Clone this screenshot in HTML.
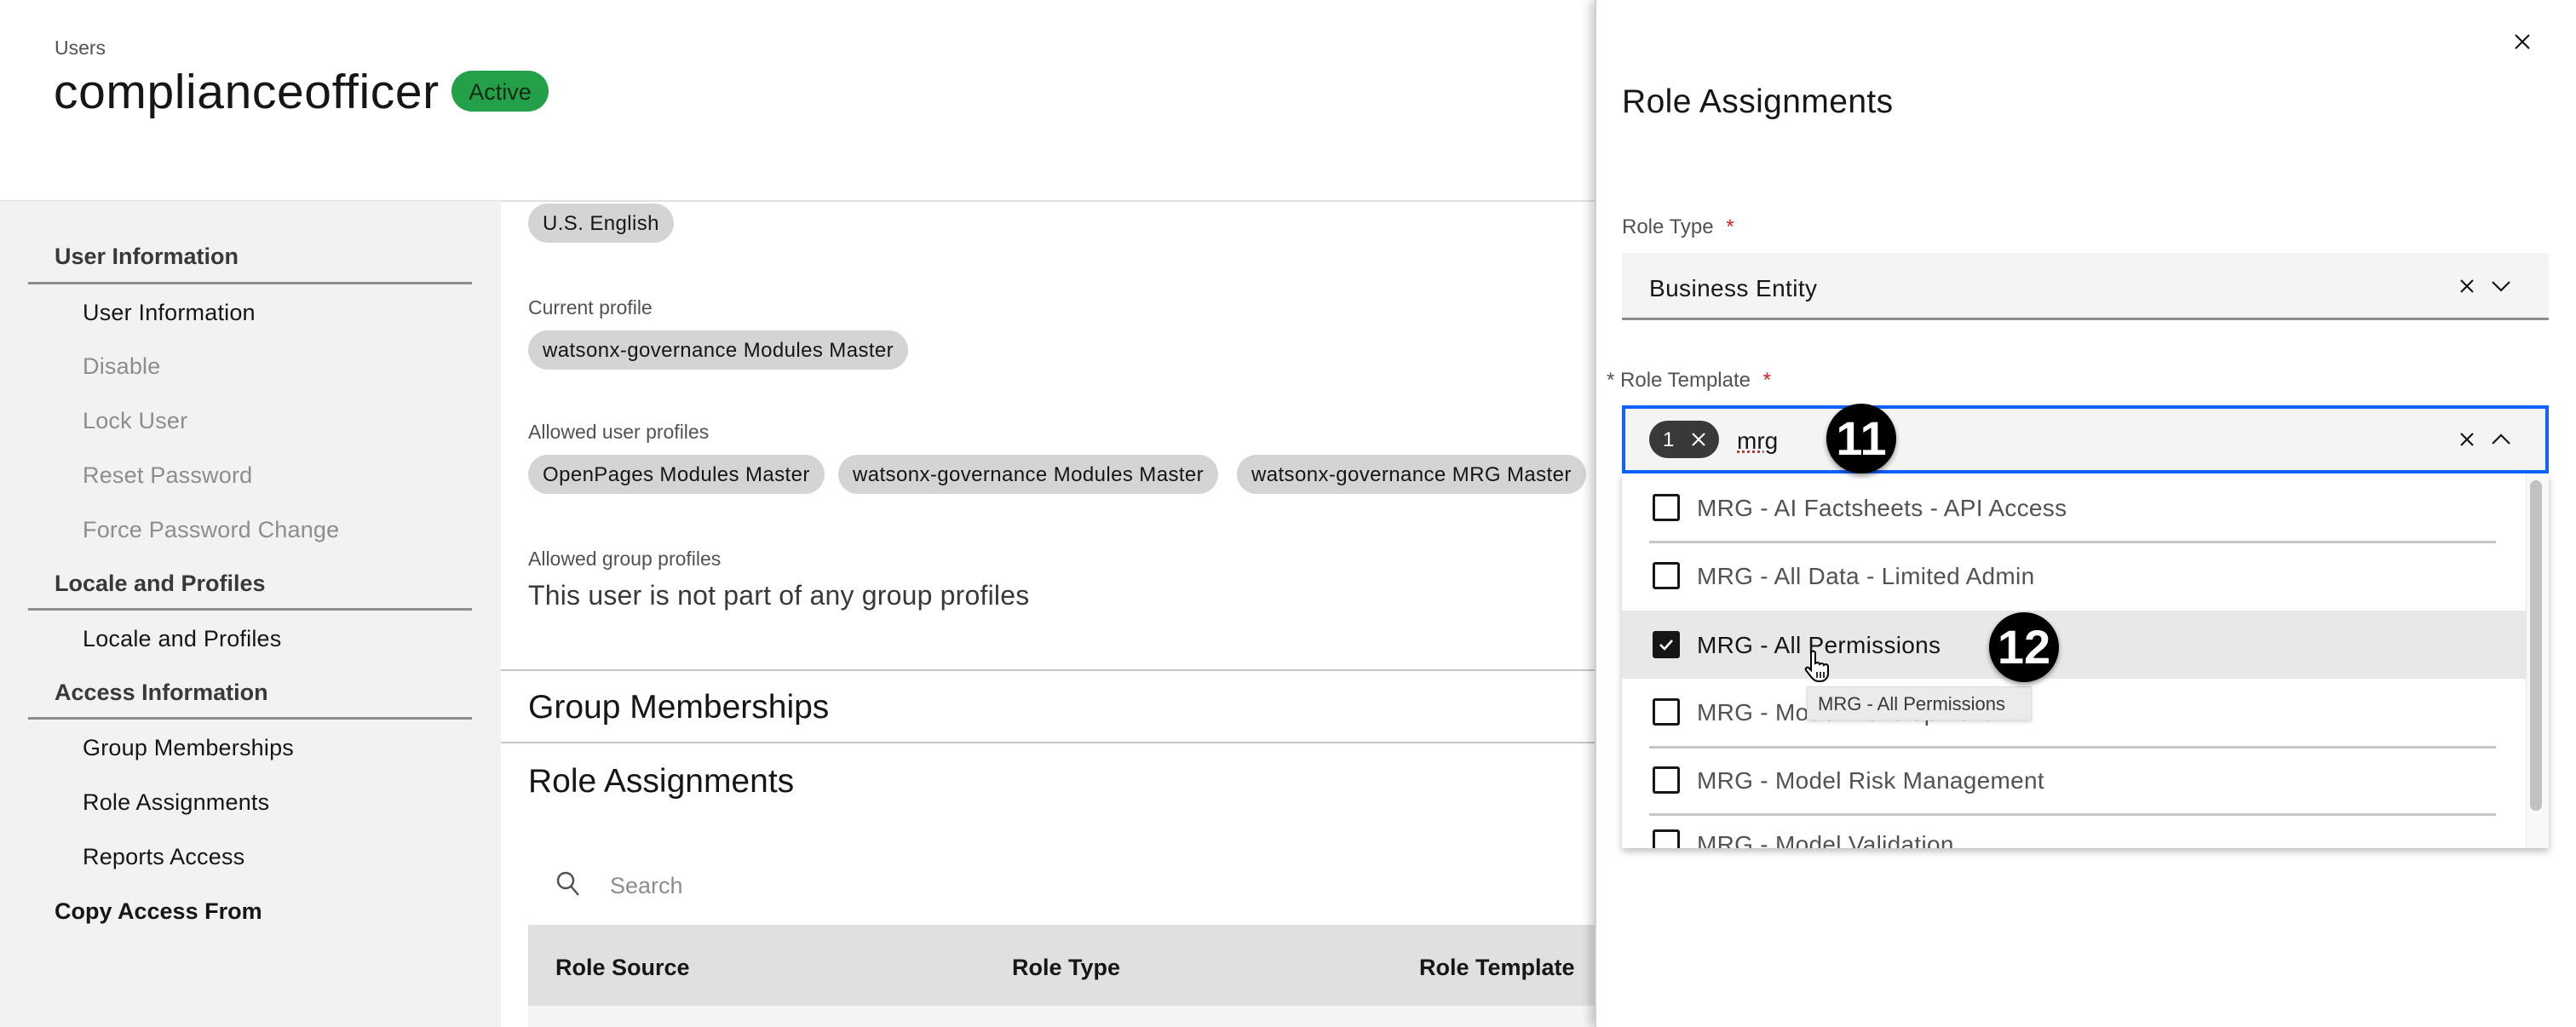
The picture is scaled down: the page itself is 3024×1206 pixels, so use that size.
<!DOCTYPE html>
<html><head><meta charset="utf-8"><style>
*{margin:0;padding:0;box-sizing:border-box}
body{width:3024px;height:1206px;overflow:hidden;background:#fff;font-family:"Liberation Sans",sans-serif;color:#161616;position:relative}
.a{position:absolute;white-space:nowrap}
.t{margin-top:3px}
.side{position:absolute;left:0;top:236px;width:588px;height:970px;background:#f2f2f2}
.hd{position:absolute;left:64px;font-size:27px;font-weight:bold;color:#393939;margin-top:3px}
.it{position:absolute;left:97px;font-size:27px;color:#161616;margin-top:3px;letter-spacing:0.2px}
.dis{color:#8d8d8d}
.ln{position:absolute;left:33px;width:521px;height:3px;background:#8d8d8d}
.tag{position:absolute;height:46px;border-radius:23px;background:#d4d4d4;font-size:24px;line-height:48px;padding:0 17px;color:#161616;letter-spacing:0.4px}
.lbl{position:absolute;left:620px;font-size:23px;color:#525252;margin-top:3px}
.row{position:absolute;left:1904px;width:1070px;height:80px}
.cb{position:absolute;left:36px;top:24px;width:32px;height:32px;border:3px solid #161616;border-radius:3px;background:#fff}
.rt{position:absolute;left:88px;top:25px;font-size:28px;color:#525252;letter-spacing:0.3px}
.sep{position:absolute;left:1936px;width:994px;height:3px;background:#c6c6c6}
.badge{position:absolute;width:82px;height:82px;border-radius:50%;background:#000;color:#fff;font-size:56px;font-weight:bold;text-align:center;line-height:82px;box-shadow:0 3px 6px rgba(0,0,0,.4)}
</style></head><body>
<div class="a t" style="left:64px;top:40px;font-size:23px;color:#525252">Users</div>
<div class="a t" style="left:63px;top:72px;font-size:57px;color:#161616;letter-spacing:0.6px">complianceofficer</div>
<div class="a" style="left:530px;top:83px;width:114px;height:48px;border-radius:24px;background:#24a148;color:#0e2a14;font-size:27px;line-height:50px;text-align:center">Active</div>
<div class="a" style="left:0;top:235px;width:1872px;height:2px;background:#e0e0e0"></div>

<div class="side">
<div class="hd" style="top:47px">User Information</div>
<div class="ln" style="top:95px"></div>
<div class="it" style="top:113px">User Information</div>
<div class="it dis" style="top:176px">Disable</div>
<div class="it dis" style="top:240px">Lock User</div>
<div class="it dis" style="top:304px">Reset Password</div>
<div class="it dis" style="top:368px">Force Password Change</div>
<div class="hd" style="top:431px">Locale and Profiles</div>
<div class="ln" style="top:478px"></div>
<div class="it" style="top:496px">Locale and Profiles</div>
<div class="hd" style="top:559px">Access Information</div>
<div class="ln" style="top:606px"></div>
<div class="it" style="top:624px">Group Memberships</div>
<div class="it" style="top:688px">Role Assignments</div>
<div class="it" style="top:752px">Reports Access</div>
<div class="hd" style="top:816px;color:#161616">Copy Access From</div>
</div>

<div class="tag" style="left:620px;top:239px">U.S. English</div>
<div class="lbl" style="top:345px">Current profile</div>
<div class="tag" style="left:620px;top:388px">watsonx-governance Modules Master</div>
<div class="lbl" style="top:491px">Allowed user profiles</div>
<div class="tag" style="left:620px;top:534px">OpenPages Modules Master</div>
<div class="tag" style="left:984px;top:534px">watsonx-governance Modules Master</div>
<div class="tag" style="left:1452px;top:534px">watsonx-governance MRG Master</div>
<div class="lbl" style="top:640px">Allowed group profiles</div>
<div class="a t" style="left:620px;top:678px;font-size:32px;color:#393939;letter-spacing:0.2px">This user is not part of any group profiles</div>
<div class="a" style="left:588px;top:786px;width:1284px;height:2px;background:#c6c6c6"></div>
<div class="a t" style="left:620px;top:806px;font-size:39px;color:#161616">Group Memberships</div>
<div class="a" style="left:588px;top:871px;width:1284px;height:2px;background:#c6c6c6"></div>
<div class="a t" style="left:620px;top:893px;font-size:39px;color:#161616">Role Assignments</div>
<svg class="a" style="left:652px;top:1022px" width="30" height="32" viewBox="0 0 30 32"><circle cx="12" cy="12" r="9" fill="none" stroke="#525252" stroke-width="2.5"/><line x1="18.5" y1="19" x2="27" y2="29" stroke="#525252" stroke-width="2.5"/></svg>
<div class="a t" style="left:716px;top:1022px;font-size:27px;color:#8d8d8d">Search</div>
<div class="a" style="left:620px;top:1086px;width:1252px;height:95px;background:#e0e0e0"></div>
<div class="a t" style="left:652px;top:1118px;font-size:27px;font-weight:bold">Role Source</div>
<div class="a t" style="left:1188px;top:1118px;font-size:27px;font-weight:bold">Role Type</div>
<div class="a t" style="left:1666px;top:1118px;font-size:27px;font-weight:bold">Role Template</div>
<div class="a" style="left:620px;top:1181px;width:1252px;height:25px;background:#f4f4f4"></div>

<!-- panel -->
<div class="a" style="left:1872px;top:0;width:1152px;height:1206px;background:#fff;box-shadow:-6px 0 10px rgba(0,0,0,.18);border-left:2px solid #d0d0d0"></div>
<svg class="a" style="left:2950px;top:38px" width="22" height="22" viewBox="0 0 22 22"><path d="M3 3L19 19M19 3L3 19" stroke="#161616" stroke-width="2.2"/></svg>
<div class="a t" style="left:1904px;top:95px;font-size:39px;color:#161616;letter-spacing:0.4px">Role Assignments</div>
<div class="a t" style="left:1904px;top:250px;font-size:24px;color:#525252">Role Type <span style="color:#da1e28;margin-left:8px">*</span></div>
<div class="a" style="left:1904px;top:297px;width:1088px;height:79px;background:#f4f4f4;border-bottom:3px solid #8d8d8d"></div>
<div class="a t" style="left:1936px;top:320px;font-size:28px;color:#161616;letter-spacing:0.4px">Business Entity</div>
<svg class="a" style="left:2886px;top:326px" width="20" height="20" viewBox="0 0 20 20"><path d="M3 3L17 17M17 3L3 17" stroke="#161616" stroke-width="2.2"/></svg>
<svg class="a" style="left:2924px;top:328px" width="24" height="16" viewBox="0 0 24 16"><path d="M2 3L12 13L22 3" fill="none" stroke="#161616" stroke-width="2.2"/></svg>
<div class="a t" style="left:1886px;top:430px;font-size:24px;color:#525252">* Role Template <span style="color:#da1e28;margin-left:8px">*</span></div>
<div class="a" style="left:1904px;top:476px;width:1088px;height:80px;background:#f4f4f4;border:4px solid #0f62fe"></div>
<div class="a" style="left:1936px;top:494px;width:82px;height:44px;border-radius:22px;background:#393939;color:#fff;font-size:24px;line-height:46px;padding-left:16px">1</div>
<svg class="a" style="left:1985px;top:507px" width="18" height="18" viewBox="0 0 18 18"><path d="M2 2L16 16M16 2L2 16" stroke="#fff" stroke-width="2"/></svg>
<div class="a t" style="left:2039px;top:499px;font-size:28px;color:#161616;text-decoration:underline dotted #da1e28">mrg</div>
<svg class="a" style="left:2886px;top:506px" width="20" height="20" viewBox="0 0 20 20"><path d="M3 3L17 17M17 3L3 17" stroke="#161616" stroke-width="2.2"/></svg>
<svg class="a" style="left:2924px;top:508px" width="24" height="16" viewBox="0 0 24 16"><path d="M2 13L12 3L22 13" fill="none" stroke="#161616" stroke-width="2.2"/></svg>

<div class="a" style="left:1904px;top:556px;width:1088px;height:440px;background:#fff;box-shadow:0 4px 8px rgba(0,0,0,.25);overflow:hidden">
<div class="a" style="left:1061px;top:0;width:27px;height:440px;background:#f8f8f8;border-left:1px solid #e8e8e8"></div>
<div class="a" style="left:1066px;top:8px;width:14px;height:388px;border-radius:7px;background:#c1c1c1"></div>
</div>
<div class="row" style="top:556px"><div class="cb"></div><div class="rt">MRG - AI Factsheets - API Access</div></div>
<div class="sep" style="top:635px"></div>
<div class="row" style="top:636px"><div class="cb"></div><div class="rt">MRG - All Data - Limited Admin</div></div>
<div class="row" style="top:717px;background:#e8e8e8;width:1062px"><div class="cb" style="background:#161616"><svg width="26" height="26" viewBox="0 0 26 26" style="position:absolute;left:0;top:0"><path d="M6 13L11 18L20 8" fill="none" stroke="#fff" stroke-width="2.6"/></svg></div><div class="rt" style="color:#161616">MRG - All Permissions</div></div>
<div class="row" style="top:796px"><div class="cb"></div><div class="rt">MRG - Model Development</div></div>
<div class="sep" style="top:876px"></div>
<div class="row" style="top:876px"><div class="cb"></div><div class="rt">MRG - Model Risk Management</div></div>
<div class="sep" style="top:955px"></div>
<div class="a" style="left:1904px;top:956px;width:1060px;height:40px;overflow:hidden"><div class="cb" style="top:18px"></div><div class="rt" style="top:20px">MRG - Model Validation</div></div>

<div class="a" style="left:2121px;top:806px;width:264px;height:40px;background:#ebebeb;border:1px solid #ddd;box-shadow:0 2px 4px rgba(0,0,0,.15);font-size:22px;line-height:40px;padding-left:12px;color:#393939">MRG - All Permissions</div>
<svg class="a" style="left:2118px;top:762px" width="34" height="40" viewBox="0 0 34 40"><path d="M9 3c2-1 4 0 4 2v12l2-1c2 0 3 1 3 2l2-1c2 0 3 1 3 2l2-1c2 0 3 1 3 3v8c0 5-4 9-9 9h-3c-3 0-5-2-7-4l-7-9c-1-2 1-4 3-3l3 3V5c0-1 0-2 1-2z" fill="#fff" stroke="#000" stroke-width="2"/><path d="M15 27v7M19 27v7M23 27v7" stroke="#000" stroke-width="1.6"/></svg>

<div class="badge" style="left:2144px;top:474px">11</div>
<div class="badge" style="left:2335px;top:719px">12</div>
</body></html>
